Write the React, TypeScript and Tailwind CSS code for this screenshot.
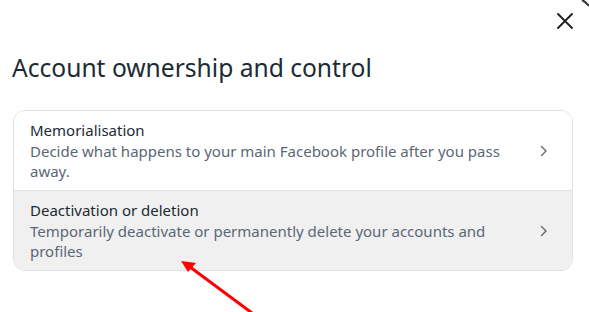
import React from "react";

const Chevron = () => (
  <svg width="12" height="12" viewBox="0 0 12 12" fill="none" className="shrink-0">
    <path d="M3.5 1.5L8 6L3.5 10.5" stroke="#5a6776" strokeWidth="1.4" strokeLinecap="round" strokeLinejoin="round" />
  </svg>
);

const Row = ({ title, desc, active }: { title: string; desc: string; active?: boolean }) => (
  <div className={`flex items-center h-[79px] pl-4 pr-[22px] ${active ? "bg-[#f0f0f0]" : "bg-white"}`}>
    <div className="flex-1 pr-8">
      <div className="text-[15px] leading-[20px] text-[#1c2b33]">{title}</div>
      <div className="text-[15px] leading-[20px] text-[#5a6776] mt-[1px]">{desc}</div>
    </div>
    <Chevron />
  </div>
);

export default function App() {
  return (
    <div className="relative w-[589px] h-[312px] bg-white overflow-hidden" style={{ fontFamily: "'Noto Sans', Roboto, sans-serif" }}>
      <div className="flex justify-end pt-[13px] pr-[16px]">
        <svg width="16" height="16" viewBox="0 0 16 16" fill="none">
          <path d="M1 1L15 15M15 1L1 15" stroke="#1c1e21" strokeWidth="1.8" strokeLinecap="round" />
        </svg>
      </div>
      <h1 className="ml-3 mt-[24px] text-[24.6px] leading-[30px] text-[#1c2b33]">Account ownership and control</h1>
      <div className="ml-[13px] mt-[27px] w-[560px] rounded-[12px] border border-[#dde0e6] overflow-hidden">
        <Row title="Memorialisation" desc="Decide what happens to your main Facebook profile after you pass away." />
        <div className="h-px bg-[#dde0e6]" />
        <Row active title="Deactivation or deletion" desc="Temporarily deactivate or permanently delete your accounts and profiles" />
      </div>
      <svg className="absolute left-0 top-0 pointer-events-none" width="589" height="312">
        <line x1="190" y1="267" x2="252" y2="313" stroke="#ff0000" strokeWidth="3" />
        <polygon points="181,261 196,263 188,272" fill="#ff0000" />
        <path d="M582 0 Q586 2 589 6" stroke="#333" strokeWidth="2" fill="none" />
      </svg>
    </div>
  );
}
